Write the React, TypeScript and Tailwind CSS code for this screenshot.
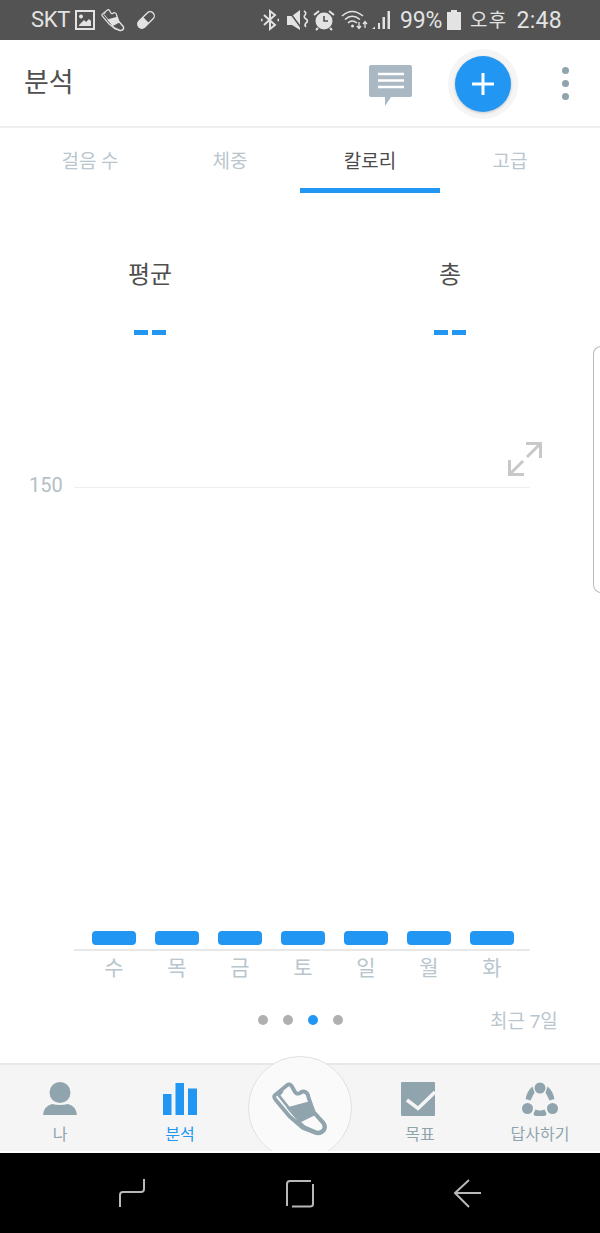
import React from "react";

const bars = ["수", "목", "금", "토", "일", "월", "화"];

function Shoe({ color, fill, className, sw = 12 }: { color: string; fill: string; className: string; sw?: number }) {
  return (
    <svg viewBox="95 85 175 172" className={className} fill="none">
      <path d="M103 130 L142 98 Q150 92 156 100 L166 118 Q170 126 180 124 Q192 114 200 120 Q208 124 209 136 L226 184 L256 216 Q264 226 258 238 Q250 250 234 248 L192 232 L150 196 L108 146 Q99 136 103 130 Z" stroke={color} strokeWidth={sw} strokeLinejoin="round" fill="none" />
      <path d="M128 116 L116 130 L164 190" stroke={color} strokeWidth={sw * 0.7} />
      <path d="M140 168 L213 148 L228 186 L176 212 Z" fill={color} />
      <path d="M176 212 L228 186 L256 218 Q262 228 256 238 Q248 248 234 246 L196 230 Z" fill={fill} stroke={color} strokeWidth={sw} strokeLinejoin="round" />
    </svg>
  );
}

function StatusIcons() {
  return (
    <>
      <div className="flex items-center gap-[4px] text-[#e3e3e3]">
        <span className="text-[22px] leading-none tracking-[-0.3px]">SKT</span>
        <svg viewBox="0 0 20 20" className="w-5 h-5 ml-[1px]">
          <path fill="#e3e3e3" fillRule="evenodd" d="M0 0H20V20H0Z M2 2V18H18V2Z M4 15 L9 10 L11 12 L14 9 L16 11 V16 H4 Z M6 4.5 a2 2 0 1 0 .01 0 Z" />
        </svg>
        <Shoe color="#e3e3e3" fill="#535353" sw={9} className="w-[24px] h-[24px] ml-[2px]" />
        <svg viewBox="0 0 24 24" className="w-5 h-5 ml-[7px]">
          <g transform="rotate(45 12 12)">
            <rect x="7" y="0" width="10" height="24" rx="5" fill="none" stroke="#e3e3e3" strokeWidth="1.6" />
            <path d="M7 12 H17 V19 a5 5 0 0 1 -10 0 Z" fill="#e3e3e3" />
          </g>
        </svg>
      </div>
      <div className="flex items-center text-[#e3e3e3]">
        <svg viewBox="0 0 20 24" className="w-5 h-6" fill="none" stroke="#e3e3e3" strokeWidth="2">
          <path d="M4 7 L15 17 L10 21 V3 L15 7 L4 17" />
          <path d="M1 12h1.5M17.5 12H19" strokeWidth="2.5" />
        </svg>
        <svg viewBox="0 0 22 22" className="w-[22px] h-[22px] ml-[7px]">
          <path d="M0 7 H5 L13 1 V21 L5 16 H0 Z" fill="#e3e3e3" />
          <path d="M1 1 L15 20" stroke="#535353" strokeWidth="1.5" />
          <path d="M17 2 q3 2 1 4 q-2 2 1 4 q3 2 0 4 q-2 2 0 4" stroke="#e3e3e3" strokeWidth="1.6" fill="none" />
        </svg>
        <svg viewBox="0 0 22 22" className="w-[22px] h-[22px] ml-[4px]">
          <circle cx="11" cy="12" r="8.5" fill="#e3e3e3" />
          <path d="M11 7 V12 H15" stroke="#535353" strokeWidth="1.6" fill="none" />
          <path d="M1 6 L6 2 M21 6 L16 2 M5 19 L3 21 M17 19 L19 21" stroke="#e3e3e3" strokeWidth="2" />
        </svg>
        <svg viewBox="0 0 30 24" className="w-[30px] h-6 ml-[6px]" fill="none" stroke="#e3e3e3" strokeWidth="1.6">
          <path d="M1 8 Q11 -1 22 8 M4 11.5 Q11 5 19 11.5 M7 15 Q11 11 16 15" />
          <circle cx="11.5" cy="18" r="1.5" fill="#e3e3e3" stroke="none" />
          <path d="M18 14 V20 M16 18 L18 20.5 L20 18 M24 20 V14 M22 16 L24 13.5 L26 16" strokeWidth="1.3" />
        </svg>
        <svg viewBox="0 0 20 24" className="w-5 h-6">
          <path d="M1 21 L4 18.500 V21 Z M7 21 V15 H9 V21 Z M11.500 21 V9 H14 V21 Z M16.500 21 V3 H19 V21 Z" fill="#e3e3e3" />
        </svg>
        <span className="text-[23px] leading-none ml-[9px] tracking-[-0.2px]">99%</span>
        <svg viewBox="0 0 14 22" className="w-[14px] h-[22px] ml-[5px]">
          <path d="M4 1 H10 V3 H14 V21 H0 V3 H4 Z" fill="#e3e3e3" />
        </svg>
        <span className="text-[19px] leading-none ml-[9px] tracking-[1.2px]">오후</span>
        <span className="text-[23px] leading-none ml-[9px] tracking-[0.3px]">2:48</span>
      </div>
    </>
  );
}

export default function App() {
  return (
    <div className="relative flex flex-col w-[600px] h-[1233px] overflow-hidden bg-white font-['Roboto','Noto_Sans_CJK_KR',sans-serif]">
      <div className="h-10 shrink-0 bg-[#535353] flex items-center justify-between pl-[31px] pr-[38px]">
        <StatusIcons />
      </div>

      <header className="h-[88px] shrink-0 border-b-2 border-[#eeeeee] flex items-center pl-6">
        <h1 className="text-[27px] leading-none font-normal text-[#4f4f4f] mt-[1px]">분석</h1>
        <svg viewBox="0 0 44 44" className="w-11 h-11 ml-[295px] mt-[8px]">
          <path d="M2 0 H41 Q43 0 43 2 V30 Q43 32 41 32 H22 L16 41 V32 H2 Q0 32 0 30 V2 Q0 0 2 0 Z" fill="#a9b8c2" />
          <path d="M9 9 H35 M9 15.500 H35 M9 22 H35" stroke="#ffffff" strokeWidth="2.6" />
        </svg>
        <div className="w-[70px] h-[70px] rounded-full bg-[#f5f5f5] flex items-center justify-center ml-[35px] mt-[2px]">
          <button className="w-14 h-14 rounded-full bg-[#2196f3] flex items-center justify-center shadow-[0_1px_3px_rgba(0,0,0,0.2)]">
            <svg viewBox="0 0 22 22" className="w-[22px] h-[22px]">
              <path d="M11 0 V22 M0 11 H22" stroke="#ffffff" strokeWidth="3" />
            </svg>
          </button>
        </div>
        <div className="flex flex-col gap-[6px] ml-[44px]">
          <span className="w-[7px] h-[7px] rounded-full bg-[#90a4ae]" />
          <span className="w-[7px] h-[7px] rounded-full bg-[#90a4ae]" />
          <span className="w-[7px] h-[7px] rounded-full bg-[#90a4ae]" />
        </div>
      </header>

      <nav className="grid grid-cols-4 px-5 h-[65px] shrink-0 text-[19px] text-[#b9c6ce]">
        <div className="flex items-center justify-center pt-[3px]">걸음 수</div>
        <div className="flex items-center justify-center pt-[3px]">체중</div>
        <div className="flex items-center justify-center pt-[9px] border-b-[5px] border-[#2196f3] font-normal text-[#4a4a4a]">칼로리</div>
        <div className="flex items-center justify-center pt-[3px]">고급</div>
      </nav>

      <section className="grid grid-cols-2 mt-[66px] shrink-0">
        {["평균", "총"].map((label) => (
          <div key={label} className="flex flex-col items-center">
            <div className="text-[24px] leading-[32px] font-normal text-[#4f4f4f]">{label}</div>
            <div className="flex gap-[4px] mt-[39px]">
              <span className="w-[14px] h-[5px] bg-[#2196f3]" />
              <span className="w-[14px] h-[5px] bg-[#2196f3]" />
            </div>
          </div>
        ))}
      </section>

      <section className="flex-1 relative">
        <div className="flex items-center ml-[29px] mt-[138px] w-[501px]">
          <span className="text-[20px] leading-[24px] text-[#b4bfc6] w-[45px] shrink-0">150</span>
          <span className="flex-1 h-[1px] mt-[4px] bg-[#eeeeee]" />
        </div>
        <svg viewBox="0 0 34 34" className="absolute left-[508px] top-[107px] w-[34px] h-[34px]" fill="none" stroke="#c8c8c8" strokeWidth="3">
          <path d="M18 1.500 H32.500 V16 M32 2 L19 15" />
          <path d="M16 32.500 H1.500 V18 M2 32 L15 19" />
        </svg>
        <div className="ml-[74px] w-[456px] mt-[434px]">
          <div className="flex pl-[18px] gap-[19px] border-b-2 border-[#e8e8e8] pb-[4px]">
            {bars.map((d) => (
              <span key={d} className="w-11 h-[14px] rounded-[4px] bg-[#2196f3]" />
            ))}
          </div>
          <div className="flex pl-[18px] gap-[19px] mt-[5px]">
            {bars.map((d) => (
              <span key={d} className="w-11 text-center text-[21px] leading-[24px] text-[#b9c6ce]">{d}</span>
            ))}
          </div>
        </div>
        <div className="absolute left-[258px] top-[680px] flex gap-[15px]">
          {[0, 1, 2, 3].map((i) => (
            <span key={i} className={i === 2 ? "w-[10px] h-[10px] rounded-full bg-[#2196f3]" : "w-[10px] h-[10px] rounded-full bg-[#b0b0b0]"} />
          ))}
        </div>
        <div className="absolute left-[490px] top-[674px] text-[19px] leading-[26px] text-[#b9c6ce]">최근 7일</div>
      </section>

      <footer className="h-[90px] shrink-0 border-t-2 border-b-2 border-t-[#e8e8e8] border-b-white bg-[#f5f5f5] grid grid-cols-5 text-[16px] leading-[18px] text-[#90a4ae]">
        <div className="flex flex-col items-center pt-[17px]">
          <svg viewBox="0 0 34 34" className="w-[34px] h-[34px]">
            <circle cx="17" cy="10.500" r="10.500" fill="#90a4ae" />
            <path d="M0 33 Q1 24 9 22 Q17 24 25 22 Q33 24 34 33 Z" fill="#90a4ae" />
          </svg>
          <span className="mt-[10px]">나</span>
        </div>
        <div className="flex flex-col items-center pt-[17px] text-[#2196f3]">
          <svg viewBox="0 0 34 34" className="w-[34px] h-[34px]">
            <path d="M0 12 H8.500 V33 H0 Z M12.500 1 H21 V33 H12.500 Z M25 6.500 H34 V33 H25 Z" fill="#2196f3" />
          </svg>
          <span className="mt-[10px]">분석</span>
        </div>
        <div />
        <div className="flex flex-col items-center pt-[17px]">
          <svg viewBox="0 0 34 34" className="w-[34px] h-[34px] mr-[4px]">
            <path d="M1 0 H33 Q34 0 34 1 V33 Q34 34 33 34 H1 Q0 34 0 33 V1 Q0 0 1 0 Z" fill="#90a4ae" />
            <path d="M6 18 L17 26.500 L34 10" stroke="#f5f5f5" strokeWidth="3.500" fill="none" />
          </svg>
          <span className="mt-[10px]">목표</span>
        </div>
        <div className="flex flex-col items-center pt-[17px]">
          <svg viewBox="0 0 36 34" className="w-9 h-[34px]">
            <circle cx="18" cy="6" r="5.500" fill="#90a4ae" />
            <circle cx="5.500" cy="26.500" r="5.500" fill="#90a4ae" />
            <circle cx="30.500" cy="26.500" r="5.500" fill="#90a4ae" />
            <path d="M10.500 4.500 L12.500 10.500 L8.500 18.500 L3.500 17 Q5 9 10.500 4.500 Z M25.500 4.500 L23.500 10.500 L27.500 18.500 L32.500 17 Q31 9 25.500 4.500 Z M11.500 31.500 L13.500 27.500 Q18 29.500 22.500 27.500 L24.500 31.500 L24 33.500 Q18 35 12 33.500 Z" fill="#90a4ae" />
          </svg>
          <span className="mt-[10px]">답사하기</span>
        </div>
      </footer>

      <div className="h-20 shrink-0 bg-black" />

      <div className="absolute left-[248px] top-[1056px] w-[104px] h-[95px] overflow-hidden">
        <div className="w-[104px] h-[104px] rounded-full bg-[#fafafa] border border-[#e0e0e0] flex items-center justify-center">
          <Shoe color="#90a4ae" fill="#fafafa" className="w-[56px] h-[55px]" />
        </div>
      </div>

      <svg viewBox="0 0 366 30" className="absolute left-[118px] top-[1178px] w-[366px] h-[30px]" fill="none" stroke="#b8b8b8" strokeWidth="2">
        <path d="M26 1 V11 Q26 14 23 14 H5 Q2 14 2 17 V29" />
        <path d="M169 28 V6 Q169 3 172 3 H193" />
        <path d="M195 6 V26 Q195 28.500 192 28.500 H174" />
        <path d="M351 2 L337 15 L351 29 M337 15 H363" />
      </svg>

      <div className="absolute left-[593px] top-[346px] w-3 h-[247px] rounded-l-[8px] border border-r-0 border-[#bdbdbd] bg-white" />
    </div>
  );
}
